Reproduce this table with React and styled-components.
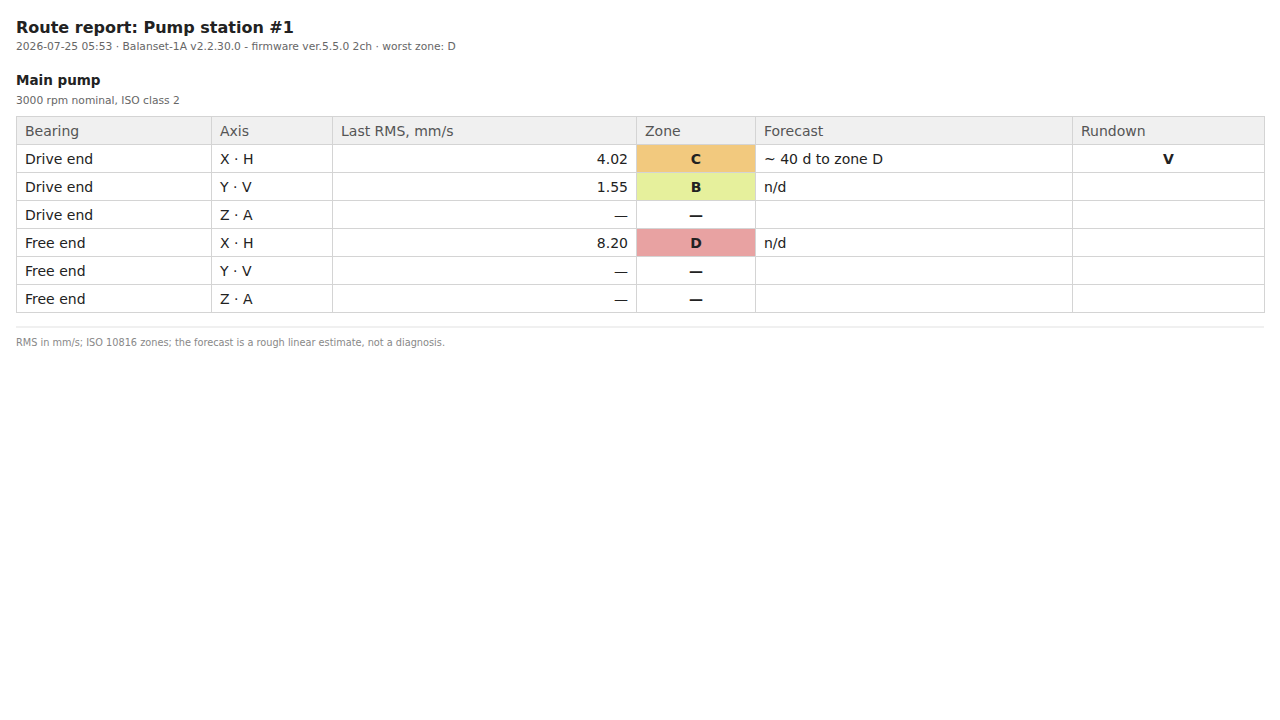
import React from 'react';
import styled, { createGlobalStyle } from 'styled-components';

const rows = [
  { bearing: 'Drive end', axis: 'X · H', rms: '4.02', zone: 'C', forecast: '~ 40 d to zone D', rundown: 'V' },
  { bearing: 'Drive end', axis: 'Y · V', rms: '1.55', zone: 'B', forecast: 'n/d', rundown: '' },
  { bearing: 'Drive end', axis: 'Z · A', rms: '—', zone: '', forecast: '', rundown: '' },
  { bearing: 'Free end', axis: 'X · H', rms: '8.20', zone: 'D', forecast: 'n/d', rundown: '' },
  { bearing: 'Free end', axis: 'Y · V', rms: '—', zone: '', forecast: '', rundown: '' },
  { bearing: 'Free end', axis: 'Z · A', rms: '—', zone: '', forecast: '', rundown: '' },
];

const zoneColors = {
  A: '#c8e6a8',
  B: '#e6f09c',
  C: '#f2c97e',
  D: '#e8a2a2',
};

const App = () => (
  <Page>
    <GlobalStyle />
    <Title>Route report: Pump station #1</Title>
    <Meta>2026-07-25 05:53 · Balanset-1A v2.2.30.0 - firmware ver.5.5.0 2ch · worst zone: D</Meta>

    <Section>
      <Machine>Main pump</Machine>
      <Meta>3000 rpm nominal, ISO class 2</Meta>
      <Table>
        <colgroup>
          <col style={{ width: 195 }} />
          <col style={{ width: 121 }} />
          <col style={{ width: 304 }} />
          <col style={{ width: 119 }} />
          <col style={{ width: 317 }} />
          <col style={{ width: 192 }} />
        </colgroup>
        <thead>
          <tr>
            <Th>Bearing</Th>
            <Th>Axis</Th>
            <Th>Last RMS, mm/s</Th>
            <Th>Zone</Th>
            <Th>Forecast</Th>
            <Th>Rundown</Th>
          </tr>
        </thead>
        <tbody>
          {rows.map((r, i) => (
            <tr key={i}>
              <Td>{r.bearing}</Td>
              <Td>{r.axis}</Td>
              <Td align="right">{r.rms}</Td>
              <ZoneCell zone={r.zone}>{r.zone || '—'}</ZoneCell>
              <Td>{r.forecast}</Td>
              <Td align="center" bold>{r.rundown}</Td>
            </tr>
          ))}
        </tbody>
      </Table>
    </Section>

    <Footer>RMS in mm/s; ISO 10816 zones; the forecast is a rough linear estimate, not a diagnosis.</Footer>
  </Page>
);

const GlobalStyle = createGlobalStyle`
  html, body {
    margin: 0;
    padding: 0;
    background: #fff;
  }
  body {
    font-family: "DejaVu Sans", Verdana, sans-serif;
    color: #222;
  }
`;

const Page = styled.div`
  padding: 17px 16px 16px;
`;

const Title = styled.h1`
  margin: 0;
  font-size: 16px;
  font-weight: bold;
  line-height: 22px;
  color: #222;
`;

const Meta = styled.div`
  font-size: 10.7px;
  line-height: 15px;
  color: #666;
`;

const Section = styled.section`
  margin-top: 17px;
`;

const Machine = styled.h2`
  margin: 0 0 3px;
  font-size: 13.5px;
  font-weight: bold;
  line-height: 19px;
  color: #222;
`;

const Table = styled.table`
  margin-top: 8px;
  width: 100%;
  border-collapse: collapse;
  table-layout: fixed;
  font-size: 14px;
`;

const Th = styled.th`
  background: #f0f0f0;
  border: 1px solid #d4d4d4;
  color: #555;
  font-weight: normal;
  text-align: left;
  height: 26px;
  padding: 1px 8px 0;
  white-space: nowrap;
`;

const Td = styled.td`
  border: 1px solid #d4d4d4;
  height: 26px;
  padding: 1px 8px 0;
  color: #222;
  text-align: ${({ align }) => align || 'left'};
  font-weight: ${({ bold }) => (bold ? 'bold' : 'normal')};
  white-space: nowrap;
`;

const ZoneCell = styled(Td)`
  text-align: center;
  font-weight: bold;
  background: ${({ zone }) => zoneColors[zone] || 'transparent'};
`;

const Footer = styled.div`
  margin-top: 13px;
  border-top: 2px solid #f0f0f0;
  padding-top: 8px;
  font-size: 9.75px;
  line-height: 14px;
  color: #888;
`;

export default App;
